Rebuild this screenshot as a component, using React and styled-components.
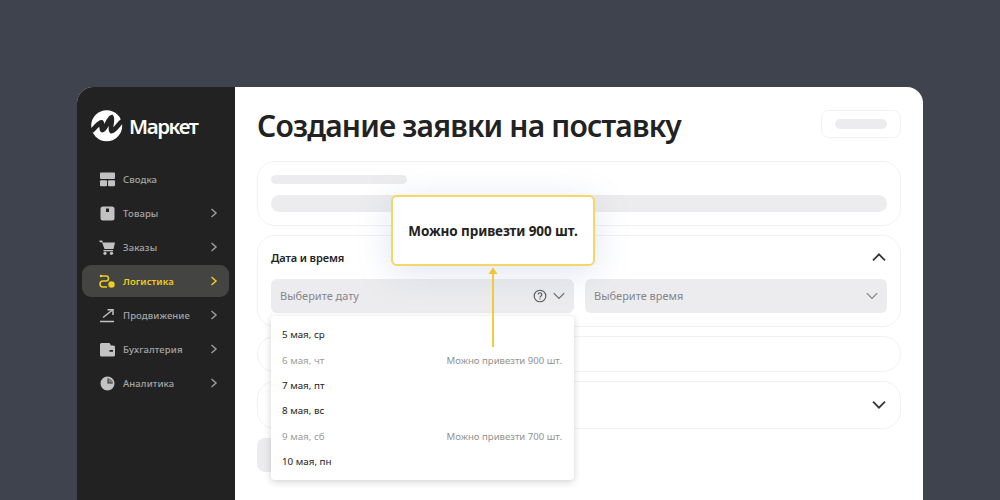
import React from "react";
import styled, { createGlobalStyle } from "styled-components";

const Global = createGlobalStyle`
  html, body { margin: 0; padding: 0; background: #3f434e; }
  body { font-family: "Noto Sans", "Liberation Sans", sans-serif; }
`;

const Stage = styled.div`
  width: 1000px;
  height: 500px;
  box-sizing: border-box;
  padding: 87px 77px 0;
  overflow: hidden;
  background: #3f434e;
`;

const Frame = styled.div`
  display: flex;
  height: 440px;
  border-radius: 16px 16px 0 0;
  overflow: hidden;
  background: #fff;
`;

const Sidebar = styled.aside`
  width: 158px;
  flex: none;
  background: #222222;
  box-sizing: border-box;
  padding: 22px 6px 0 5px;
`;

const Brand = styled.div`
  display: flex;
  align-items: center;
  gap: 6px;
  height: 33px;
  padding-left: 8px;
  margin-bottom: 21px;
`;

const BrandName = styled.span`
  font-size: 20.5px;
  font-weight: 600;
  color: #fff;
  letter-spacing: -1.4px;
`;

const NavRow = styled.div`
  display: flex;
  align-items: center;
  height: 32px;
  margin-bottom: 2px;
  padding: 0 10px 0 17px;
  border-radius: 9px;
  background: ${(p) => (p.$active ? "#444443" : "transparent")};
  color: ${(p) => (p.$active ? "#f0cc20" : "#a6a6a6")};
`;

const NavIcon = styled.svg`
  width: 17px;
  height: 17px;
  flex: none;
  margin-right: 7px;
  color: ${(p) => (p.$active ? "#f0cc20" : "#c2c2c2")};
`;

const NavLabel = styled.span`
  flex: 1;
  font-size: 9.5px;
  font-weight: ${(p) => (p.$active ? 600 : 500)};
  letter-spacing: 0.1px;
`;

const Main = styled.main`
  position: relative;
  flex: 1;
  box-sizing: border-box;
  padding: 20px 23px 0 22px;
`;

const Header = styled.div`
  display: flex;
  align-items: center;
  justify-content: space-between;
  height: 40px;
  margin-bottom: 14px;
`;

const Title = styled.h1`
  margin: 0 0 4px;
  font-size: 30px;
  font-weight: 600;
  letter-spacing: -0.83px;
  color: #222;
  white-space: nowrap;
`;

const GhostButton = styled.div`
  width: 80px;
  height: 28px;
  box-sizing: border-box;
  margin-top: -6px;
  border: 1px solid #f1f1f2;
  border-radius: 8px;
  display: flex;
  align-items: center;
  justify-content: flex-end;
  padding-right: 13px;
`;

const Skeleton = styled.div`
  width: ${(p) => p.$w};
  height: ${(p) => p.$h}px;
  border-radius: ${(p) => p.$h / 2}px;
  background: #ececee;
`;

const Card = styled.section`
  box-sizing: border-box;
  height: ${(p) => p.$h}px;
  margin-bottom: 9px;
  border: 1px solid #f1f1f2;
  border-radius: 18px;
  padding: ${(p) => p.$pad || "0"};
`;

const SkeletonStack = styled.div`
  display: flex;
  flex-direction: column;
  gap: 11px;
`;

const CardHead = styled.div`
  display: flex;
  align-items: center;
  justify-content: space-between;
  height: 18px;
  margin-bottom: 13px;
`;

const CardTitle = styled.span`
  font-size: 11px;
  font-weight: 600;
  letter-spacing: -0.1px;
  color: #222;
`;

const CollapsedCard = styled(Card)`
  display: flex;
  align-items: center;
  justify-content: flex-end;
  padding-right: 13px;
`;

const Selects = styled.div`
  display: grid;
  grid-template-columns: 303px 302px;
  gap: 11px;
`;

const SelectWrap = styled.div`
  position: relative;
`;

const Select = styled.div`
  display: flex;
  align-items: center;
  height: 34px;
  box-sizing: border-box;
  padding: 0 8px 0 9px;
  gap: 5px;
  border-radius: 6px;
  background: #ececee;
  color: #85868a;
  font-size: 11px;
`;

const SelectText = styled.span`
  flex: 1;
  margin-top: -2px;
`;

const Dropdown = styled.div`
  position: absolute;
  z-index: 2;
  left: 0;
  right: 0;
  top: 37px;
  height: 164px;
  box-sizing: border-box;
  padding: 6px 12px 0 11px;
  background: #fff;
  border-radius: 4px;
  box-shadow: 0 2px 7px rgba(30, 30, 40, 0.2);
`;

const Option = styled.div`
  display: flex;
  align-items: center;
  justify-content: space-between;
  height: 25.4px;
  font-size: 9.8px;
  font-weight: 400;
  color: ${(p) => (p.$muted ? "#9b9b9b" : "#222222")};
`;

const Note = styled.span`
  color: #929292;
  font-size: 9.6px;
`;

const SubmitSkeleton = styled.div`
  width: 60px;
  height: 34px;
  border-radius: 8px;
  background: #ececee;
`;

const Tooltip = styled.div`
  position: absolute;
  z-index: 3;
  left: 156px;
  top: 108px;
  width: 204px;
  height: 71px;
  box-sizing: border-box;
  display: flex;
  align-items: center;
  justify-content: center;
  background: #fff;
  border: 2px solid #f6d665;
  border-radius: 6px;
  box-shadow: 0 6px 34px rgba(110, 130, 190, 0.22);
  font-size: 13.5px;
  font-weight: 700;
  letter-spacing: -0.1px;
  color: #222;
`;

const Pointer = styled.svg`
  position: absolute;
  z-index: 4;
  left: 253px;
  top: 179px;
  width: 10px;
  height: 84px;
`;

const Chevron = ({ dir = "right", size = 12, color = "currentColor", width = 1.5 }) => {
  const d = {
    right: "M4.500 2 L9 6 L4.500 10",
    down: "M1.500 3.500 L6 8 L10.500 3.500",
    up: "M1.500 8.500 L6 4 L10.500 8.500",
  }[dir];
  return (
    <svg width={size} height={size} viewBox="0 0 12 12" fill="none" stroke={color} strokeWidth={width} style={{ flex: "none" }}>
      <path d={d} />
    </svg>
  );
};

const icons = {
  summary: (
    <g fill="currentColor">
      <rect x="1" y="1.500" width="15" height="6.500" rx="1" />
      <rect x="1" y="9.200" width="7" height="6" rx="1" />
      <rect x="9" y="9.200" width="7" height="6" rx="1" />
    </g>
  ),
  goods: (
    <path fill="currentColor" fillRule="evenodd" d="M4 1.500h9a2.500 2.500 0 0 1 2.500 2.500v9a2.500 2.500 0 0 1-2.500 2.500H4A2.500 2.500 0 0 1 1.500 13V4A2.500 2.500 0 0 1 4 1.500zM7 3.500v3.500h3V3.500z" />
  ),
  orders: (
    <g fill="currentColor">
      <path d="M0.500 1.500h2.800l.6 2H16l-1.500 6.500H5.500L3 3.200H.5z" />
      <rect x="4.500" y="11" width="9.500" height="1.300" />
      <circle cx="6" cy="14.300" r="1.600" />
      <circle cx="12.500" cy="14.300" r="1.600" />
    </g>
  ),
  logistics: (
    <g>
      <path fill="none" stroke="currentColor" strokeWidth="1.500" d="M2 3h5a2.500 2.500 0 0 1 0 5H4a2.800 2.800 0 0 0 0 6h4" />
      <circle cx="2" cy="3" r="1.300" fill="currentColor" />
      <circle cx="12.500" cy="11.500" r="3.200" fill="currentColor" />
    </g>
  ),
  promo: (
    <g fill="none" stroke="currentColor" strokeWidth="1.500">
      <path d="M4 10.500 L13.500 3" />
      <path d="M8.500 2.800H14V8" />
      <path d="M1 14.500H15" />
    </g>
  ),
  accounting: (
    <path fill="currentColor" fillRule="evenodd" d="M1 3.500a1.500 1.500 0 0 1 1.500-1.500h8L12 4.500h2.500A1.500 1.500 0 0 1 16 6v8a1.500 1.500 0 0 1-1.500 1.500H2.500A1.500 1.500 0 0 1 1 14zM10.500 9v1.800H14V9z" />
  ),
  analytics: (
    <g fill="currentColor">
      <path fillRule="evenodd" d="M8.500 1.500a7 7 0 1 1-7 7 7 7 0 0 1 7-7zM8.500 3.200v5.300h5.300a5.300 5.300 0 0 0-5.300-5.300z" />
      <path d="M9.300 3.400a4.500 4.500 0 0 1 4.300 4.300H9.300z" opacity="0.55" />
    </g>
  ),
};

const nav = [
  { key: "summary", label: "Сводка", arrow: false },
  { key: "goods", label: "Товары", arrow: true },
  { key: "orders", label: "Заказы", arrow: true },
  { key: "logistics", label: "Логистика", arrow: true, active: true },
  { key: "promo", label: "Продвижение", arrow: true },
  { key: "accounting", label: "Бухгалтерия", arrow: true },
  { key: "analytics", label: "Аналитика", arrow: true },
];

const options = [
  { date: "5 мая, ср" },
  { date: "6 мая, чт", note: "Можно привезти 900 шт." },
  { date: "7 мая, пт" },
  { date: "8 мая, вс" },
  { date: "9 мая, сб", note: "Можно привезти 700 шт." },
  { date: "10 мая, пн" },
];

const Logo = () => (
  <svg width="33" height="33" viewBox="0 0 33 33" style={{ flex: "none" }}>
    <circle cx="16.700" cy="16.700" r="15.500" fill="#fff" />
    <path d="M1.500 22 C5 19 8 14 11.500 13.500 C13 15 10.500 20 12.500 21 C16 20 18 10 21.500 8.500 C23 11 19.500 20 21.500 22 C25 22 28 15 33 11.500" fill="none" stroke="#222" strokeWidth="4.800" />
  </svg>
);

export default function App() {
  return (
    <Stage>
      <Global />
      <Frame>
        <Sidebar>
          <Brand>
            <Logo />
            <BrandName>Маркет</BrandName>
          </Brand>
          {nav.map((n) => (
            <NavRow key={n.key} $active={n.active}>
              <NavIcon viewBox="0 0 17 17" $active={n.active}>{icons[n.key]}</NavIcon>
              <NavLabel $active={n.active}>{n.label}</NavLabel>
              {n.arrow && <Chevron dir="right" size={12} color={n.active ? "#f0cc20" : "#9a9a9a"} />}
            </NavRow>
          ))}
        </Sidebar>
        <Main>
          <Header>
            <Title>Создание заявки на поставку</Title>
            <GhostButton>
              <Skeleton $w="52px" $h={10} />
            </GhostButton>
          </Header>
          <Card $h={65} $pad="13px 13px 0">
            <SkeletonStack>
              <Skeleton $w="136px" $h={9} />
              <Skeleton $w="100%" $h={17} />
            </SkeletonStack>
          </Card>
          <Card $h={92} $pad="12px 13px 0">
            <CardHead>
              <CardTitle>Дата и время</CardTitle>
              <Chevron dir="up" size={16} color="#333" width={1.300} />
            </CardHead>
            <Selects>
              <SelectWrap>
                <Select>
                  <SelectText>Выберите дату</SelectText>
                  <svg width="14" height="14" viewBox="0 0 14 14" fill="none" stroke="#55565a" strokeWidth="1.100">
                    <circle cx="7" cy="7" r="5.800" />
                    <path d="M5.200 5.600a1.800 1.800 0 1 1 2.800 1.500c-.7.400-1 .8-1 1.400" />
                    <path d="M7 9.600v1" />
                  </svg>
                  <Chevron dir="down" size={14} color="#6c6d71" width={1.100} />
                </Select>
                <Dropdown>
                  {options.map((o) => (
                    <Option key={o.date} $muted={!!o.note}>
                      <span>{o.date}</span>
                      {o.note && <Note>{o.note}</Note>}
                    </Option>
                  ))}
                </Dropdown>
              </SelectWrap>
              <Select>
                <SelectText>Выберите время</SelectText>
                <Chevron dir="down" size={14} color="#85868a" width={1.100} />
              </Select>
            </Selects>
          </Card>
          <Card $h={36} />
          <CollapsedCard $h={48}>
            <Chevron dir="down" size={16} color="#333" width={1.300} />
          </CollapsedCard>
          <SubmitSkeleton />
          <Tooltip>Можно привезти 900 шт.</Tooltip>
          <Pointer viewBox="0 0 10 84">
            <path d="M5 1.500 L9.500 8 H.5 Z" fill="#f3c52e" />
            <path d="M5 6 V81" stroke="#f3c52e" strokeWidth="1.800" />
          </Pointer>
        </Main>
      </Frame>
    </Stage>
  );
}
